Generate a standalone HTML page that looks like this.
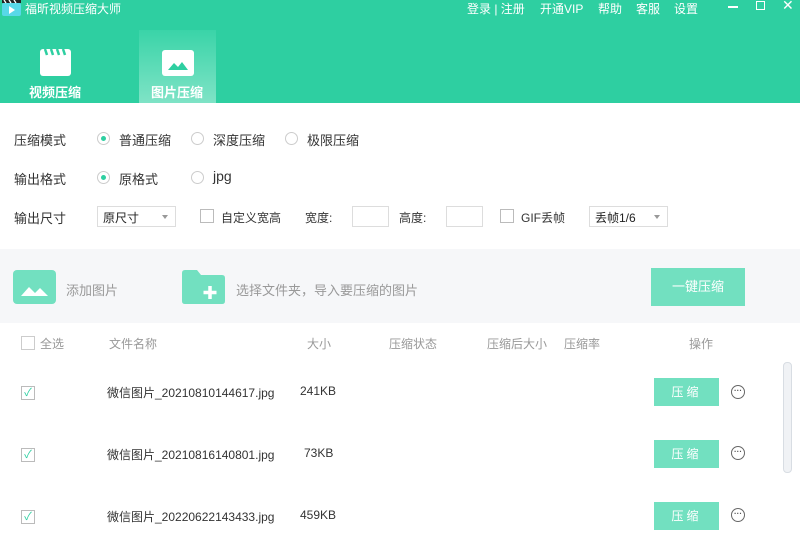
<!DOCTYPE html>
<html><head><meta charset="utf-8"><style>
*{margin:0;padding:0;box-sizing:border-box}
body{width:800px;height:533px;overflow:hidden;background:#fff;font-family:"Liberation Sans","Noto Sans CJK SC",sans-serif;font-size:12px;color:#333;position:relative}
.a{position:absolute;white-space:nowrap}
.hdr{position:absolute;left:0;top:0;width:800px;height:103px;background:#2ecfa1}
.tab{position:absolute;left:139px;top:30px;width:77px;height:73px;background:linear-gradient(#3ad4a8,#7fe3c6)}
.w{color:#fff}
.radio{position:absolute;width:13px;height:13px;border:1px solid #ccc;border-radius:50%;background:#fff}
.radio.on::after{content:"";position:absolute;left:3px;top:3px;width:5px;height:5px;border-radius:50%;background:#2ecfa1}
.cb{position:absolute;width:14px;height:14px;border:1px solid #bbb;background:#fff}
.sel{position:absolute;height:21px;border:1px solid #ddd;background:#fff;font-size:12px;padding:2px 5px;color:#222}
.sel::after{content:"";position:absolute;right:7px;top:8px;border:3px solid transparent;border-top:4px solid #999}
.inp{position:absolute;width:37px;height:21px;border:1px solid #ddd;background:#fff}
.btn{position:absolute;width:65px;height:28px;background:#72e0c0;color:#fff;text-align:center;line-height:28px;font-size:12px;letter-spacing:3px}
.dots{position:absolute;width:14px;height:14px;border:1.3px solid #666;border-radius:50%;font-size:8px;line-height:9px;text-align:center;color:#555;font-weight:bold}
.g{color:#999}
</style></head><body>
<div class="hdr"></div>
<div class="tab"></div>
<svg class="a" style="left:2px;top:0" width="20" height="16"><rect x="0" y="3" width="19" height="13" rx="2" fill="#58d8e8"/><rect x="0" y="0" width="19" height="3" fill="#222"/><path d="M2 0l2 3M7 0l2 3M12 0l2 3" stroke="#fff" stroke-width="1.3"/><path d="M7 6l6 4-6 4z" fill="#fff"/></svg>
<div class="a w" style="left:25px;top:0;font-size:12px">福昕视频压缩大师</div>
<div class="a w" style="left:467px;top:0;font-size:12px">登录 | 注册</div>
<div class="a w" style="left:540px;top:0;font-size:12px">开通VIP</div>
<div class="a w" style="left:598px;top:0;font-size:12px">帮助</div>
<div class="a w" style="left:636px;top:0;font-size:12px">客服</div>
<div class="a w" style="left:674px;top:0;font-size:12px">设置</div>
<div class="a" style="left:728px;top:6px;width:10px;height:2px;background:#fff"></div>
<div class="a" style="left:756px;top:1px;width:9px;height:9px;border:1.5px solid #fff"></div>
<div class="a w" style="left:782px;top:-3px;font-size:14px">✕</div>
<svg class="a" style="left:40px;top:49px" width="31" height="27"><rect x="0" y="0" width="31" height="27" rx="3" fill="#fff"/><path d="M5 0l2 6M11 0l2 6M17 0l2 6M23 0l2 6" stroke="#2ecfa1" stroke-width="2.5"/></svg>
<div class="a w" style="left:29px;top:82px;font-size:13px;font-weight:bold">视频压缩</div>
<svg class="a" style="left:162px;top:50px" width="32" height="26"><rect width="32" height="26" rx="3" fill="#fff"/><path d="M6 20l6-7 4 4 4-5 6 8z" fill="#2ecfa1"/></svg>
<div class="a w" style="left:151px;top:82px;font-size:13px;font-weight:bold">图片压缩</div>

<div class="a" style="left:14px;top:130px;font-size:13px">压缩模式</div>
<div class="radio on" style="left:97px;top:132px"></div><div class="a" style="left:119px;top:130px;font-size:13px">普通压缩</div>
<div class="radio" style="left:191px;top:132px"></div><div class="a" style="left:213px;top:130px;font-size:13px">深度压缩</div>
<div class="radio" style="left:285px;top:132px"></div><div class="a" style="left:307px;top:130px;font-size:13px">极限压缩</div>
<div class="a" style="left:14px;top:169px;font-size:13px">输出格式</div>
<div class="radio on" style="left:97px;top:171px"></div><div class="a" style="left:119px;top:169px;font-size:13px">原格式</div>
<div class="radio" style="left:191px;top:171px"></div><div class="a" style="left:213px;top:168px;font-size:14px">jpg</div>
<div class="a" style="left:14px;top:208px;font-size:13px">输出尺寸</div>
<div class="sel" style="left:97px;top:206px;width:79px">原尺寸</div>
<div class="cb" style="left:200px;top:209px"></div><div class="a" style="left:221px;top:209px">自定义宽高</div>
<div class="a" style="left:305px;top:209px">宽度:</div>
<div class="inp" style="left:352px;top:206px"></div>
<div class="a" style="left:399px;top:209px">高度:</div>
<div class="inp" style="left:446px;top:206px"></div>
<div class="cb" style="left:500px;top:209px"></div><div class="a" style="left:521px;top:209px">GIF丢帧</div>
<div class="sel" style="left:589px;top:206px;width:79px">丢帧1/6</div>

<div class="a" style="left:0;top:249px;width:800px;height:74px;background:#f6f7f9"></div>
<svg class="a" style="left:13px;top:270px" width="43" height="34"><rect width="43" height="34" rx="4" fill="#72e0c0"/><path d="M8 26l8-9 6 6 5-5 8 8z" fill="#fff"/></svg>
<div class="a g" style="left:66px;top:280px;font-size:13px">添加图片</div>
<svg class="a" style="left:182px;top:270px" width="43" height="34"><path d="M0 3q0-3 3-3h12l4 5h21q3 0 3 3v23q0 3-3 3H3q-3 0-3-3z" fill="#72e0c0"/><path d="M28 16v13M21.5 22.5h13" stroke="#fff" stroke-width="3.5"/></svg>
<div class="a g" style="left:236px;top:280px;font-size:13px">选择文件夹，导入要压缩的图片</div>
<div class="a" style="left:651px;top:268px;width:94px;height:38px;background:#72e0c0;color:#fff;text-align:center;line-height:38px;font-size:13px">一键压缩</div>

<div class="cb" style="left:21px;top:336px;border-color:#ccc"></div><div class="a g" style="left:40px;top:335px">全选</div>
<div class="a g" style="left:109px;top:335px">文件名称</div>
<div class="a g" style="left:307px;top:335px">大小</div>
<div class="a g" style="left:389px;top:335px">压缩状态</div>
<div class="a g" style="left:487px;top:335px">压缩后大小</div>
<div class="a g" style="left:564px;top:335px">压缩率</div>
<div class="a g" style="left:689px;top:335px">操作</div>

<div class="cb" style="left:21px;top:386px;color:#2ecfa1;font-size:11px;line-height:12px;text-align:center">✓</div>
<div class="a" style="left:107px;top:384px">微信图片_20210810144617.jpg</div><div class="a" style="left:300px;top:384px">241KB</div>
<div class="btn" style="left:654px;top:378px">压缩</div><div class="dots" style="left:731px;top:385px">···</div>
<div class="cb" style="left:21px;top:448px;color:#2ecfa1;font-size:11px;line-height:12px;text-align:center">✓</div>
<div class="a" style="left:107px;top:446px">微信图片_20210816140801.jpg</div><div class="a" style="left:304px;top:446px">73KB</div>
<div class="btn" style="left:654px;top:440px">压缩</div><div class="dots" style="left:731px;top:446px">···</div>
<div class="cb" style="left:21px;top:510px;color:#2ecfa1;font-size:11px;line-height:12px;text-align:center">✓</div>
<div class="a" style="left:107px;top:508px">微信图片_20220622143433.jpg</div><div class="a" style="left:300px;top:508px">459KB</div>
<div class="btn" style="left:654px;top:502px">压缩</div><div class="dots" style="left:731px;top:508px">···</div>
<div class="a" style="left:783px;top:362px;width:9px;height:111px;border:1px solid #d8dde3;border-radius:4px;background:#f0f2f5"></div>
</body></html>
